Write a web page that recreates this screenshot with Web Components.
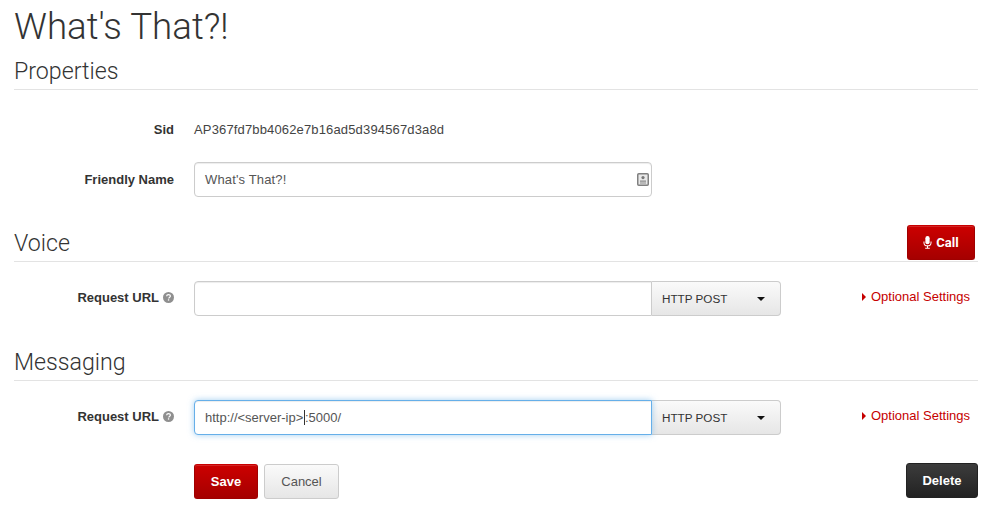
<!DOCTYPE html>
<html>
<head>
<meta charset="utf-8">
<title>What's That?!</title>
<style>
  html, body { margin: 0; background: #fff; }
  body { font-family: "Liberation Sans", Arial, sans-serif; color: #333; font-size: 13px; }
</style>
</head>
<body>
<app-page>
  <page-title>What's That?!</page-title>

  <section-head style="--head-top: 9px">Properties</section-head>
  <field-row label="Sid" style="--row-top: 26px; --row-h: 26px">
    <span style="font-size:13px;color:#444;letter-spacing:.15px">AP367fd7bb4062e7b16ad5d394567d3a8d</span>
  </field-row>
  <field-row label="Friendly Name" style="--row-top: 20px">
    <text-field contact style="width:458px;letter-spacing:.15px">What's That?!</text-field>
  </field-row>

  <section-head style="--head-top: 31px">Voice
    <red-button slot="actions" icon="mic" style="--btn-w: 68px">Call</red-button>
  </section-head>
  <field-row label="Request URL" help style="--row-top: 19px">
    <url-group></url-group>
    <optional-link slot="aside">Optional Settings</optional-link>
  </field-row>

  <section-head style="--head-top: 31px">Messaging</section-head>
  <field-row label="Request URL" help style="--row-top: 19px">
    <url-group value="http://&lt;server-ip&gt;|:5000/" focused></url-group>
    <optional-link slot="aside">Optional Settings</optional-link>
  </field-row>

  <form-actions>
    <red-button style="--btn-w: 64px">Save</red-button>
    <grey-button>Cancel</grey-button>
    <dark-button slot="end">Delete</dark-button>
  </form-actions>
</app-page>

<script>
class AppPage extends HTMLElement {
  _root = this.attachShadow({ mode: 'open' })
  _template = this._root.innerHTML = `
    <style>
      :host { display: block; padding: 0 14px; height: 515px; box-sizing: border-box; overflow: hidden; }
    </style>
    <slot></slot>
  `
}

class PageTitle extends HTMLElement {
  _root = this.attachShadow({ mode: 'open' })
  _template = this._root.innerHTML = `
    <style>
      :host { display: block; padding-top: 6px; font-family: Roboto, "Liberation Sans", sans-serif; font-weight: 300; font-size: 36.7px; line-height: 41px; color: #333; }
    </style>
    <slot></slot>
  `
}

class SectionHead extends HTMLElement {
  _root = this.attachShadow({ mode: 'open' })
  _template = this._root.innerHTML = `
    <style>
      :host {
        display: flex;
        justify-content: space-between;
        align-items: flex-end;
        margin-top: var(--head-top, 0);
        padding-bottom: 1px;
        height: 32px;
        box-sizing: content-box;
        border-bottom: 1px solid #e3e3e3;
        font-family: Roboto, "Liberation Sans", sans-serif;
        font-weight: 300;
        font-size: 23.2px;
        line-height: 32px;
        color: #333;
      }
      .title { padding-bottom: 1px; }
      .actions { margin-right: 3px; }
    </style>
    <div class="title"><slot></slot></div>
    <div class="actions"><slot name="actions"></slot></div>
  `
}

class FieldRow extends HTMLElement {
  _root = this.attachShadow({ mode: 'open' })
  connectedCallback() {
    const hasHelp = this.hasAttribute('help')
    const help = hasHelp ? `
      <svg width="11" height="11" viewBox="0 0 11 11"><circle cx="5.5" cy="5.5" r="5.5" fill="#8f8f8f"/>
      <path d="M3.6 4.3c.1-1.1.9-1.7 1.9-1.7 1.1 0 1.9.6 1.9 1.5 0 .8-.5 1.1-1 1.4-.4.3-.6.5-.6 1" fill="none" stroke="#fff" stroke-width="1.2"/>
      <rect x="4.9" y="7.3" width="1.3" height="1.3" fill="#fff"/></svg>` : ''
    this._root.innerHTML = `
      <style>
        :host {
          display: grid;
          grid-template-columns: 160px 1fr auto;
          column-gap: 20px;
          align-items: center;
          margin-top: var(--row-top, 0);
          min-height: var(--row-h, 35px);
        }
        .label {
          display: flex;
          justify-content: flex-end;
          align-items: center;
          gap: 4px;
          font-weight: bold;
          font-size: 13px;
          color: #333;
          margin-top: ${hasHelp ? '-2px' : '0'};
        }
        .aside { margin-right: 8px; margin-top: -4px; }
      </style>
      <div class="label"><span>${this.getAttribute('label')}</span>${help}</div>
      <div><slot></slot></div>
      <div class="aside"><slot name="aside"></slot></div>
    `
  }
}

class TextField extends HTMLElement {
  _root = this.attachShadow({ mode: 'open' })
  connectedCallback() {
    const contact = this.hasAttribute('contact') ? `
      <svg class="contact" width="12" height="13" viewBox="0 0 12 13">
        <rect x=".75" y=".75" width="10.5" height="11.5" rx="1" fill="#e8e8e8" stroke="#808080" stroke-width="1.5"/>
        <circle cx="6" cy="4.6" r="1.6" fill="#777"/><path d="M3 7.6h6v1.2H3zM3 9.6h6v1H3z" fill="#8a8a8a"/>
      </svg>` : ''
    this._root.innerHTML = `
      <style>
        :host {
          display: flex;
          align-items: center;
          justify-content: space-between;
          box-sizing: border-box;
          height: 35px;
          padding: 0 2px 0 10px;
          background: #fff;
          border: 1px solid #ccc;
          border-radius: 4px;
          box-shadow: inset 0 1px 1px rgba(0,0,0,.075);
          font-size: 13px;
          color: #555;
        }
        :host([focused]) {
          border-color: #66afe9;
          box-shadow: inset 0 1px 1px rgba(0,0,0,.075), 0 0 6px rgba(102,175,233,.6);
        }
        :host([joined]) { border-radius: 4px 0 0 4px; }
      </style>
      <div><slot></slot></div>
      ${contact}
    `
  }
}

class UrlGroup extends HTMLElement {
  _root = this.attachShadow({ mode: 'open' })
  connectedCallback() {
    const focused = this.hasAttribute('focused')
    const [before, after] = (this.getAttribute('value') || '').split('|')
    const esc = s => (s || '').replace(/</g, '&lt;').replace(/>/g, '&gt;')
    const cursor = focused ? '<span class="cursor"></span>' : ''
    this._root.innerHTML = `
      <style>
        :host { display: flex; width: 587px; }
        text-field { flex: 0 0 458px; position: relative; z-index: 1; }
        .cursor { display: inline-block; width: 1px; height: 15px; background: #333; vertical-align: -3px; margin: 0 -.4px 0 1px; }
        .select {
          display: flex;
          justify-content: space-between;
          align-items: center;
          box-sizing: border-box;
          flex: 0 0 129px;
          height: 35px;
          padding: 0 15px 0 10px;
          border: 1px solid #ccc;
          border-left: 0;
          border-radius: 0 4px 4px 0;
          background: linear-gradient(#fafafa, #e6e6e6);
          font-size: 11.7px;
          color: #333;
        }
        .arrow { width: 0; height: 0; border: 4px solid transparent; border-top-color: #111; border-bottom: 0; }
      </style>
      <text-field joined ${focused ? 'focused' : ''}>${esc(before)}${cursor}${esc(after)}</text-field>
      <div class="select"><span>HTTP POST</span><span class="arrow"></span></div>
    `
  }
}

class OptionalLink extends HTMLElement {
  _root = this.attachShadow({ mode: 'open' })
  _template = this._root.innerHTML = `
    <style>
      :host { display: inline-flex; align-items: center; gap: 5px; font-size: 13px; color: #c60000; }
      .tri { width: 0; height: 0; border: 4px solid transparent; border-left: 4px solid #c60000; border-right: 0; }
    </style>
    <span class="tri"></span><slot></slot>
  `
}

const buttonBase = `
  :host {
    display: inline-flex;
    align-items: center;
    justify-content: center;
    gap: 4px;
    box-sizing: border-box;
    height: 35px;
    width: var(--btn-w, auto);
    border-radius: 3px;
    font-size: 13px;
    font-weight: bold;
    color: #fff;
    vertical-align: top;
  }
`

class RedButton extends HTMLElement {
  _root = this.attachShadow({ mode: 'open' })
  connectedCallback() {
    const mic = this.getAttribute('icon') === 'mic' ? `
      <svg width="9" height="13" viewBox="0 0 9 14">
        <rect x="2.2" y="0" width="4.6" height="9" rx="2.3" fill="#fff"/>
        <path d="M.7 6v1.2c0 2.1 1.6 3.4 3.8 3.4s3.8-1.3 3.8-3.4V6M4.5 10.6v2.2M2 13.2h5" fill="none" stroke="#fff" stroke-width="1.1"/>
      </svg>` : ''
    this._root.innerHTML = `
      <style>
        ${buttonBase}
        :host {
          background: linear-gradient(#cc0000, #a50000);
          border: 1px solid #a00000;
          border-top-color: #c80000;
          box-shadow: inset 0 1px 0 rgba(255,255,255,.15);
        }
      </style>
      ${mic}<slot></slot>
    `
  }
}

class GreyButton extends HTMLElement {
  _root = this.attachShadow({ mode: 'open' })
  _template = this._root.innerHTML = `
    <style>
      ${buttonBase}
      :host {
        width: 75px;
        font-weight: normal;
        color: #555;
        background: linear-gradient(#fafafa, #e6e6e6);
        border: 1px solid #ccc;
      }
    </style>
    <slot></slot>
  `
}

class DarkButton extends HTMLElement {
  _root = this.attachShadow({ mode: 'open' })
  _template = this._root.innerHTML = `
    <style>
      ${buttonBase}
      :host {
        width: 72px;
        background: linear-gradient(#3c3c3c, #222);
        border: 1px solid #222;
      }
    </style>
    <slot></slot>
  `
}

class FormActions extends HTMLElement {
  _root = this.attachShadow({ mode: 'open' })
  _template = this._root.innerHTML = `
    <style>
      :host { display: flex; justify-content: space-between; margin-top: 29px; padding-left: 180px; }
      .start { display: flex; gap: 6px; }
      .end { margin-top: -1px; }
    </style>
    <div class="start"><slot></slot></div>
    <div class="end"><slot name="end"></slot></div>
  `
}

customElements.define('app-page', AppPage)
customElements.define('page-title', PageTitle)
customElements.define('section-head', SectionHead)
customElements.define('field-row', FieldRow)
customElements.define('text-field', TextField)
customElements.define('url-group', UrlGroup)
customElements.define('optional-link', OptionalLink)
customElements.define('red-button', RedButton)
customElements.define('grey-button', GreyButton)
customElements.define('dark-button', DarkButton)
customElements.define('form-actions', FormActions)
</script>
</body>
</html>
